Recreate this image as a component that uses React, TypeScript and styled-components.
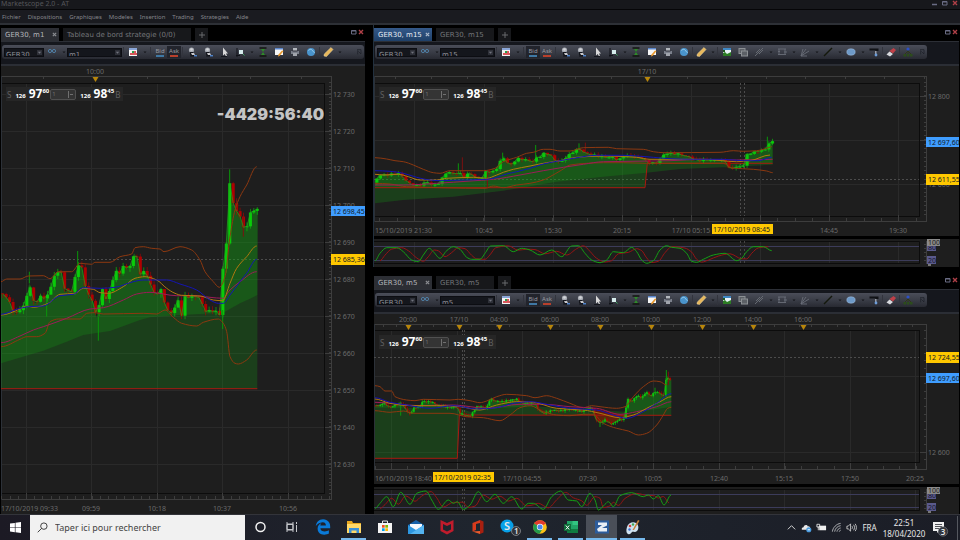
import React from "react";
import styled, { createGlobalStyle, css } from "styled-components";
import { FaEdgeLegacy } from "react-icons/fa";

const GlobalStyle = createGlobalStyle`
  * { box-sizing: border-box; }
  body { margin: 0; background: #000; font-family: "Noto Sans", "Open Sans", sans-serif; }
  button, input, select { font: inherit; color: inherit; border: 0; padding: 0; margin: 0; background: none; border-radius: 0; }
  svg { display: block; }
`;

/* ------------------------------------------------------------------ */
/* Chart geometry                                                      */
/* ------------------------------------------------------------------ */

type Pt = [number, number];

/* Traces are stored on a grid of three units per chart unit. */
const trace = (ox: number, oy: number, raw: string): Pt[] =>
  raw
    .trim()
    .split(/\s+/)
    .map((p) => {
      const [x, y] = p.split(",").map(Number);
      return [ox + x / 3, oy + y / 3] as Pt;
    });

const toPath = (pts: Pt[]) =>
  pts.map(([x, y], i) => `${i ? "L" : "M"}${x.toFixed(1)} ${y.toFixed(1)}`).join("");

/* Horizontal-tangent-limited cubic through every point. */
const toCurve = (pts: Pt[]) => {
  const slope = pts.map((p, i) => {
    if (i === 0 || i === pts.length - 1) return 0;
    const a = (p[1] - pts[i - 1][1]) / (p[0] - pts[i - 1][0]);
    const b = (pts[i + 1][1] - p[1]) / (pts[i + 1][0] - p[0]);
    return a * b <= 0 ? 0 : (2 * a * b) / (a + b);
  });
  return pts
    .map(([x, y], i) => {
      if (!i) return `M${x.toFixed(1)} ${y.toFixed(1)}`;
      const [px, py] = pts[i - 1];
      const h = (x - px) / 3;
      return `C${(px + h).toFixed(1)} ${(py + h * slope[i - 1]).toFixed(1)} ${(x - h).toFixed(1)} ${(y - h * slope[i]).toFixed(1)} ${x.toFixed(1)} ${y.toFixed(1)}`;
    })
    .join("");
};

const toArea = (top: Pt[], bottom: Pt[]) => toPath([...top, ...[...bottom].reverse()]) + "Z";

const valueAt = (pts: Pt[], x: number) => {
  for (let i = 1; i < pts.length; i++) {
    const [x0, y0] = pts[i - 1];
    const [x1, y1] = pts[i];
    if (x <= x1) return y0 + ((y1 - y0) * (x - x0)) / (x1 - x0 || 1);
  }
  return pts[pts.length - 1][1];
};

interface Candle {
  x: number;
  open: number;
  close: number;
  high: number;
  low: number;
}

const toCandles = (price: Pt[], step: number, swing: number): Candle[] => {
  const end = price[price.length - 1][0];
  const out: Candle[] = [];
  let open = price[0][1];
  let i = 0;
  for (let x = price[0][0] + step / 2; x <= end; x += step) {
    const close = valueAt(price, x) + Math.sin(i * 2.7) * swing * 0.3;
    const up = Math.abs(Math.sin(i * 12.9)) * swing;
    const down = Math.abs(Math.cos(i * 7.3)) * swing;
    out.push({ x, open, close, high: Math.min(open, close) - up, low: Math.max(open, close) + down });
    open = close;
    i++;
  }
  return out;
};

interface Label {
  x: number;
  text: string;
  anchor?: "start" | "middle";
}
interface Spike {
  x: number;
  top: number;
  bottom: number;
  rise: boolean;
}
interface ChartSpec {
  name: string;
  box: [number, number, number, number];
  plot: { right: number; top: number; bottom: number };
  axis: { right: number; top: number; bottom: number };
  cols: number[];
  rows: { y: number; text?: string }[];
  minorX: number;
  minorY: number;
  topTicks: number[];
  markers: { x: number; text: string }[];
  dates: Label[];
  cursor?: { xs: number[]; left: number; text: string };
  cursorY: { y: number; text: string };
  last: { y: number; text: string };
  price: Pt[];
  step: number;
  swing: number;
  base: Pt[];
  cloud: Pt[];
  dip?: Pt[];
  upper: Pt[];
  lower: Pt[];
  blue: Pt[];
  orange: Pt[];
  pink: Pt[];
  spikes: Spike[];
}

const range = (from: number, to: number, step: number) => {
  const out: number[] = [];
  for (let v = from; v <= to; v += step) out.push(v);
  return out;
};

const spikes = (ox: number, oy: number, rows: [number, number, number, boolean][]): Spike[] =>
  rows.map(([x, t, b, rise]) => ({ x: ox + x / 3, top: oy + t / 3, bottom: oy + b / 3, rise }));

const m1 = (raw: string) => trace(0, 130, raw);
const m1Chart: ChartSpec = {
  name: "GER30, m1",
  box: [1, 66, 364, 448],
  plot: { right: 324, top: 83, bottom: 493 },
  axis: { right: 331, top: 76, bottom: 499 },
  cols: [26, 91, 157, 222, 288],
  rows: [94, 131, 168, 205, 242, 279, 316, 353, 390, 427, 464].map((y, i) => ({ y, text: `12 ${730 - i * 10}` })),
  minorX: 8.2,
  minorY: 3.7,
  topTicks: [43, 95, 147, 198, 250, 301],
  markers: [{ x: 95, text: "10:00" }],
  dates: [
    { x: 1, text: "17/10/2019 09:33", anchor: "start" },
    { x: 91, text: "09:59" },
    { x: 157, text: "10:18" },
    { x: 222, text: "10:37" },
    { x: 288, text: "10:56" },
  ],
  cursorY: { y: 259, text: "12 685,36" },
  last: { y: 211, text: "12 698,45" },
  price: m1(
    "3,490 15,495 25,510 38,540 48,552 62,535 75,525 88,458 100,515 108,518 118,500 135,503 148,490 160,438 172,430 183,420 195,485 205,478 215,488 225,440 235,405 245,412 257,470 268,503 278,510 290,563 298,520 306,472 318,510 328,480 340,450 350,415 360,435 370,405 382,415 390,410 402,370 410,380 420,430 432,425 445,440 460,490 470,492 482,478 495,520 505,548 520,548 532,503 545,555 555,500 570,500 585,498 600,503 612,540 625,545 640,540 655,550 660,555 668,420 678,360 689,155 698,220 710,240 720,262 730,290 740,293 750,250 760,240 773,240"
  ),
  step: 3.44,
  swing: 4,
  base: m1("3,776 772,776"),
  cloud: m1("3,700 130,662 200,635 250,615 330,603 420,570 450,562 530,556 670,548 720,520 750,506 772,495"),
  upper: m1(
    "3,455 20,447 60,447 85,438 130,437 150,446 175,425 215,425 240,400 275,403 285,397 330,397 360,380 395,372 405,353 430,350 455,355 480,357 492,365 540,350 575,360 600,390 615,425 640,455 658,472 675,440 690,320 705,240 720,200 740,165 770,110"
  ),
  lower: m1(
    "3,650 60,628 80,620 110,620 135,610 150,575 175,567 240,567 260,550 285,548 310,552 430,550 470,552 495,540 520,562 545,580 590,588 610,577 655,567 670,580 680,605 690,680 705,700 715,702 740,690 770,660"
  ),
  blue: m1(
    "3,553 50,538 85,530 130,528 180,497 220,493 250,473 300,475 345,472 400,455 430,450 500,450 540,462 590,480 630,510 655,520 670,520 690,495 720,455 740,430 770,388"
  ),
  orange: m1(
    "3,555 60,537 80,528 100,532 145,520 180,493 225,490 250,475 280,478 300,488 325,490 370,470 405,445 435,440 470,450 500,475 525,490 545,496 600,498 640,510 668,512 690,460 710,415 740,380 770,348"
  ),
  pink: m1(
    "3,638 60,618 100,600 130,590 200,565 270,537 310,533 370,510 410,492 450,487 530,497 580,497 630,502 668,505 690,480 720,455 770,425"
  ),
  spikes: spikes(0, 130, [
    [88, 425, 460, true],
    [140, 505, 560, true],
    [233, 363, 405, true],
    [295, 560, 632, true],
    [668, 540, 597, true],
    [689, 118, 160, true],
    [710, 205, 240, false],
    [730, 260, 320, false],
  ]),
};

const m15 = (raw: string) => trace(370, 120, raw);
const m15Chart: ChartSpec = {
  name: "GER30, m15",
  box: [374, 66, 585, 170],
  plot: { right: 919, top: 83, bottom: 216 },
  axis: { right: 926, top: 76, bottom: 221 },
  cols: [414, 484, 553, 622, 691, 760, 829, 898],
  rows: [{ y: 96, text: "12 800" }, { y: 140 }, { y: 184, text: "12 600" }],
  minorX: 17.3,
  minorY: 4.4,
  topTicks: [395, 431, 467, 503, 539, 575, 611, 647, 687, 726, 766, 805, 845, 884, 924],
  markers: [{ x: 647, text: "17/10" }],
  dates: [
    { x: 375, text: "15/10/2019 21:30", anchor: "start" },
    { x: 484, text: "10:45" },
    { x: 553, text: "15:30" },
    { x: 622, text: "20:15" },
    { x: 691, text: "17/10 05:15" },
    { x: 829, text: "14:45" },
    { x: 898, text: "19:30" },
  ],
  cursor: { xs: [740, 744], left: 712, text: "17/10/2019 08:45" },
  cursorY: { y: 179, text: "12 611,55" },
  last: { y: 142, text: "12 697,60" },
  price: m15(
    "15,188 25,165 50,165 85,160 100,172 115,190 145,198 170,185 190,198 205,190 220,170 230,155 245,160 270,160 285,175 298,155 315,172 335,175 345,155 375,155 390,125 398,110 412,128 425,135 440,115 470,120 490,125 497,110 505,120 515,100 540,102 550,118 570,128 590,110 610,95 627,85 645,100 670,105 690,110 710,112 730,112 745,122 760,108 785,108 800,112 820,115 835,130 860,128 885,100 930,102 945,108 965,112 975,122 1010,120 1065,120 1075,145 1110,140 1122,135 1130,105 1145,98 1170,92 1188,88 1195,70 1208,65"
  ),
  step: 3.63,
  swing: 2.4,
  base: m15("15,203 825,203 832,130 1208,130"),
  cloud: m15("15,250 100,240 250,230 400,212 560,185 700,170 830,158 930,147 1060,142 1208,134"),
  upper: m15(
    "15,113 50,117 75,122 100,125 130,135 160,148 190,158 210,160 240,152 340,152 375,145 400,125 420,118 440,112 470,100 490,97 520,88 540,88 570,93 600,93 640,83 715,82 740,86 820,88 850,95 880,98 1050,97 1090,92 1120,94 1160,92 1190,85 1205,80"
  ),
  lower: m15(
    "15,190 60,192 110,200 345,205 370,198 400,203 440,195 480,190 520,180 540,170 575,150 600,135 650,130 700,128 760,128 830,130 1060,130 1085,144 1150,148 1190,153 1208,158"
  ),
  blue: m15(
    "15,152 60,154 100,160 140,172 180,180 210,182 280,180 350,178 380,172 410,162 440,155 480,145 520,132 560,124 610,115 680,106 760,106 800,108 850,112 900,116 970,118 1060,118 1120,122 1165,122 1205,112"
  ),
  orange: m15(
    "15,163 40,165 85,163 115,170 150,180 200,180 230,175 310,172 350,175 380,165 400,157 430,148 480,138 530,128 570,122 620,112 700,108 800,112 840,118 1000,118 1100,125 1140,122 1200,105"
  ),
  pink: m15("15,195 100,195 200,190 300,183 370,178 450,165 520,152 580,142 640,133 700,125 780,124 900,122 1000,118 1100,120 1208,118"),
  spikes: spikes(370, 120, [
    [265, 130, 160, true],
    [277, 112, 165, false],
    [398, 98, 115, true],
    [497, 75, 112, true],
    [627, 70, 88, true],
    [646, 68, 100, false],
    [352, 155, 205, false],
    [1192, 50, 80, true],
  ]),
};

const m5 = (raw: string) => trace(370, 365, raw);
const m5Chart: ChartSpec = {
  name: "GER30, m5",
  box: [374, 314, 585, 170],
  plot: { right: 919, top: 330, bottom: 462 },
  axis: { right: 926, top: 324, bottom: 469 },
  cols: [391, 457, 522, 588, 653, 719, 784, 850, 915],
  rows: [{ y: 376 }, { y: 452, text: "12 600" }],
  minorX: 16.4,
  minorY: 7.6,
  topTicks: range(383, 924, 12.6),
  markers: [
    { x: 408, text: "20:00" },
    { x: 459, text: "17/10" },
    { x: 499, text: "04:00" },
    { x: 550, text: "06:00" },
    { x: 600, text: "08:00" },
    { x: 651, text: "10:00" },
    { x: 702, text: "12:00" },
    { x: 753, text: "14:00" },
    { x: 803, text: "16:00" },
  ],
  dates: [
    { x: 375, text: "16/10/2019 18:40", anchor: "start" },
    { x: 522, text: "17/10 04:55" },
    { x: 588, text: "07:30" },
    { x: 653, text: "10:05" },
    { x: 719, text: "12:40" },
    { x: 784, text: "15:15" },
    { x: 850, text: "17:50" },
    { x: 915, text: "20:25" },
  ],
  cursor: { xs: [462, 464], left: 433, text: "17/10/2019 02:35" },
  cursorY: { y: 357, text: "12 724,55" },
  last: { y: 378, text: "12 697,60" },
  price: m5(
    "15,120 30,122 40,112 60,128 75,120 95,115 105,130 120,148 130,130 150,125 155,110 185,110 200,120 235,128 260,125 270,145 300,155 310,140 320,125 335,125 350,130 360,100 375,108 395,110 440,102 455,115 495,115 505,135 520,145 550,135 570,138 600,132 635,140 655,130 668,128 675,160 690,175 705,165 725,178 745,165 765,162 770,100 785,110 800,92 815,98 830,80 840,95 855,80 870,85 884,95 889,22 895,45 904,42"
  ),
  step: 2.1,
  swing: 2,
  base: m5("15,280 262,280 268,150 904,151"),
  cloud: m5("15,128 262,128 300,140 400,128 500,124 600,132 668,134 765,140 820,138 860,132 904,126"),
  dip: m5("668,128 700,136 750,148 765,148"),
  upper: m5(
    "15,62 30,65 45,78 65,78 75,95 110,105 135,107 160,103 240,105 265,103 300,107 330,113 350,108 380,95 410,88 470,92 495,98 530,92 560,100 600,115 640,128 665,122 690,125 740,130 765,125 790,95 820,65 850,48 870,50 890,60"
  ),
  lower: m5(
    "15,137 60,142 100,138 130,145 240,145 290,155 340,158 390,167 420,150 450,128 480,122 520,140 560,150 600,152 640,148 670,148 700,175 740,190 775,198 805,210 830,205 860,180 880,150 893,130 904,127"
  ),
  blue: m5("15,98 60,112 110,120 180,130 250,122 320,132 380,128 430,115 480,110 540,120 600,130 680,135 730,150 770,160 820,140 860,115 904,86"),
  orange: m5("15,102 60,115 120,122 200,122 270,125 330,135 380,120 440,110 490,112 560,130 640,135 690,145 750,158 790,150 830,130 870,110 904,95"),
  pink: m5("15,112 150,122 250,120 350,130 450,118 520,118 600,125 680,130 750,148 800,140 860,125 904,110"),
  spikes: spikes(370, 365, [
    [92, 110, 152, true],
    [889, 15, 95, true],
    [895, 20, 60, false],
    [690, 170, 186, true],
    [855, 68, 85, true],
    [120, 140, 152, false],
  ]),
};

const oscM15 = trace(
  370,
  120,
  "15,422 30,400 50,383 80,383 100,395 125,420 145,425 160,405 178,385 190,395 210,415 230,392 250,380 270,388 290,412 305,418 330,418 345,400 362,378 400,377 430,395 455,385 480,390 510,405 545,390 575,410 605,378 625,377 645,400 665,420 690,428 710,420 730,395 760,398 785,382 800,395 815,420 830,430 850,422 870,390 890,377 905,382 930,385 950,400 965,424 980,427 1000,418 1030,405 1065,400 1100,422 1115,415 1130,395 1150,380 1180,380 1205,392"
);
const oscM5 = trace(
  370,
  365,
  "15,430 30,415 50,395 70,425 92,382 120,418 140,385 168,378 185,405 205,433 235,405 250,415 262,410 280,433 300,420 325,380 350,410 375,388 400,415 425,395 455,432 475,415 490,415 520,433 545,395 572,378 595,405 620,408 635,425 660,385 675,405 685,435 705,418 715,410 730,425 750,392 785,383 820,395 835,390 850,402 865,392 882,420 903,390"
);

/* ------------------------------------------------------------------ */
/* Chart drawing                                                       */
/* ------------------------------------------------------------------ */

const Canvas = styled.svg`
  width: 100%;
  height: auto;
  background: #1e1e1e;
`;
const AxisText = styled.text`
  font-family: "Noto Sans", sans-serif;
  font-size: 7px;
  fill: #6a6a6a;
`;
const TagText = styled(AxisText)`
  fill: #111a26;
`;
const OscText = styled(AxisText)<{ $dark?: boolean }>`
  fill: ${(p) => (p.$dark ? "#1a1a1a" : "#14142a")};
`;

const GREEN = "#08d008";
const RED = "#b40000";
const AXIS = "#3d3d3d";
const GRID = "#2a2a2a";
const BAND = "#8c3810";
const CLOUD = "rgba(20, 165, 20, 0.25)";

function PriceChart({ spec }: { spec: ChartSpec }) {
  const { box, plot, axis } = spec;
  const left = box[0];
  const candles = toCandles(spec.price, spec.step, spec.swing);
  const body = Math.max(1.6, spec.step - 0.4);
  return (
    <Canvas viewBox={box.join(" ")} role="img" aria-label={spec.name}>
      <g stroke={GRID} shapeRendering="crispEdges">
        {spec.cols.map((x) => (
          <path key={x} d={`M${x + 0.5} ${plot.top}V${plot.bottom}`} />
        ))}
        {spec.rows.map(({ y }) => (
          <path key={y} d={`M${left} ${y + 0.5}H${plot.right}`} />
        ))}
      </g>
      <g fill="none" stroke="#0c0c0c" shapeRendering="crispEdges">
        <path d={`M${left} ${plot.top + 0.5}H${plot.right + 0.5}V${plot.bottom + 0.5}H${left}`} />
      </g>
      <g fill="none" stroke={AXIS} shapeRendering="crispEdges">
        <path d={`M${left + 0.5} ${axis.top + 0.5}H${axis.right + 0.5}V${axis.bottom + 0.5}H${left}`} />
        <path d={`M${left + 0.5} ${axis.top}V${axis.bottom + 1}`} stroke="#2c3138" />
        {spec.topTicks.map((x) => (
          <path key={x} d={`M${Math.round(x) + 0.5} ${axis.top}v3`} />
        ))}
        {spec.cols.map((x) => (
          <path key={x} d={`M${x + 0.5} ${axis.bottom}v-6`} />
        ))}
        {range(spec.cols[0] % spec.minorX, axis.right, spec.minorX)
          .filter((x) => x > left)
          .map((x) => (
            <path key={x} d={`M${Math.round(x) + 0.5} ${axis.bottom}v-3`} />
          ))}
        {spec.rows.map(({ y }) => (
          <path key={y} d={`M${axis.right} ${y + 0.5}h-6`} />
        ))}
        {range(axis.top + 6, axis.bottom - 4, spec.minorY).map((y) => (
          <path key={y} d={`M${axis.right} ${Math.round(y) + 0.5}h-2`} />
        ))}
      </g>
      <g stroke="#4c4c4c" strokeDasharray="2 2" shapeRendering="crispEdges">
        <path d={`M${left} ${spec.cursorY.y + 0.5}H${plot.right}`} />
        {spec.cursor?.xs.map((x) => (
          <path key={x} d={`M${x + 0.5} ${plot.top}V${plot.bottom}`} />
        ))}
      </g>

      <path d={toArea(spec.price, spec.base)} fill={CLOUD} />
      <path d={toArea(spec.price, spec.cloud)} fill={CLOUD} />
      {spec.dip && (
        <path
          d={toArea(spec.price.filter(([x]) => x >= spec.dip![0][0] && x <= spec.dip![spec.dip!.length - 1][0]), spec.dip)}
          fill="rgba(150, 0, 0, 0.6)"
        />
      )}
      <path d={toPath(spec.base)} fill="none" stroke="#a81a10" />

      {candles.map((c) => {
        const color = c.close <= c.open ? GREEN : RED;
        return (
          <g key={c.x}>
            <path d={`M${c.x} ${c.high}V${c.low}`} stroke={color} strokeWidth="0.8" opacity="0.75" />
            <rect
              x={c.x - body / 2}
              y={Math.min(c.open, c.close)}
              width={body}
              height={Math.max(1, Math.abs(c.open - c.close))}
              fill={color}
              opacity="0.95"
            />
          </g>
        );
      })}
      {spec.spikes.map((s) => (
        <path key={s.x} d={`M${s.x} ${s.top}V${s.bottom}`} stroke={s.rise ? "#0a960a" : "#7c1010"} />
      ))}
      <path d={toPath(candles.map((c) => [c.x, c.close]))} fill="none" stroke="#20a81c" strokeWidth="0.7" />
      <g fill="none" strokeWidth="1">
        <path d={toCurve(spec.upper)} stroke={BAND} />
        <path d={toCurve(spec.lower)} stroke={BAND} />
        <path d={toCurve(spec.pink)} stroke="#9c1c58" />
        <path d={toCurve(spec.orange)} stroke="#b07810" />
        <path d={toCurve(spec.blue)} stroke="#1414b4" />
      </g>

      {spec.markers.map((m) => (
        <g key={m.x}>
          <AxisText x={m.x} y={axis.top - 2} textAnchor="middle">
            {m.text}
          </AxisText>
          <path d={`M${m.x - 2.5} ${axis.top + 1}h6l-3 5z`} fill="#b8860b" />
        </g>
      ))}
      {spec.rows.map(
        ({ y, text }) =>
          text && (
            <AxisText key={y} x={axis.right + 2} y={y + 3}>
              {text}
            </AxisText>
          )
      )}
      {spec.dates.map((d) => (
        <AxisText key={d.x} x={d.x} y={axis.bottom + 12} textAnchor={d.anchor ?? "middle"}>
          {d.text}
        </AxisText>
      ))}
      <rect x={axis.right} y={spec.last.y - 5} width={box[0] + box[2] - axis.right} height="10" fill="#3f9dff" />
      <TagText x={axis.right + 2} y={spec.last.y + 3}>
        {spec.last.text}
      </TagText>
      <rect x={axis.right} y={spec.cursorY.y - 5} width={box[0] + box[2] - axis.right} height="11" fill="#ffc800" />
      <TagText x={axis.right + 2} y={spec.cursorY.y + 3}>
        {spec.cursorY.text}
      </TagText>
      {spec.cursor && (
        <>
          <rect x={spec.cursor.left} y={axis.bottom + 3} width="61" height="10" fill="#ffc800" />
          <TagText x={spec.cursor.left + 1} y={axis.bottom + 11}>
            {spec.cursor.text}
          </TagText>
        </>
      )}
    </Canvas>
  );
}

interface OscProps {
  name: string;
  top: number;
  height: number;
  levels: [number, number];
  line: Pt[];
  cols: number[];
  cursor: number[];
}

function Oscillator({ name, top, height, levels, line, cols, cursor }: OscProps) {
  const end = line[line.length - 1][0];
  const signal = line
    .map(([x, y], i) => [x + 5, i ? (y * 3 + line[i - 1][1]) / 4 : y] as Pt)
    .filter(([x]) => x <= end + 1);
  const bottom = top + height;
  return (
    <Canvas viewBox={`374 ${top} 585 ${height}`} role="img" aria-label={name}>
      <g stroke={GRID} shapeRendering="crispEdges">
        {cols.map((x) => (
          <path key={x} d={`M${x + 0.5} ${top + 2}V${bottom - 3}`} />
        ))}
      </g>
      <path d={`M374 ${top + 2.5}H919.5V${bottom - 3.5}H374`} fill="none" stroke="#0c0c0c" />
      <path d={`M926.5 ${top + 2}V${bottom - 3}`} stroke={AXIS} />
      {range(top + 5, bottom - 4, 4).map((y) => (
        <path key={y} d={`M924 ${y + 0.5}h3`} stroke={AXIS} />
      ))}
      <g stroke="#3c3c5a" shapeRendering="crispEdges">
        {levels.map((y) => (
          <path key={y} d={`M374 ${y + 0.5}H919`} />
        ))}
      </g>
      <g stroke="#444" strokeDasharray="2 2" shapeRendering="crispEdges">
        {cursor.map((x) => (
          <path key={x} d={`M${x + 0.5} ${top + 2}V${bottom - 3}`} />
        ))}
      </g>
      <path d={toCurve(signal)} fill="none" stroke="#961414" />
      <path d={toCurve(line)} fill="none" stroke="#14a014" />
      <rect x="927" y={levels[0]} width="9" height="5" fill="#5a5a8c" />
      <rect x="927" y={levels[1] - 4} width="9" height="8" fill="#5a5a8c" />
      <OscText x="928" y={levels[0] + 4}>
        80
      </OscText>
      <OscText x="928" y={levels[1] + 3}>
        20
      </OscText>
      <rect x="927" y={levels[0] - 7} width="13" height="7" fill="#8a8a8a" />
      <OscText $dark x="928" y={levels[0] - 1}>
        100
      </OscText>
      <rect x="928" y={levels[1] + 4} width="3" height="2" fill="#777" />
    </Canvas>
  );
}

/* ------------------------------------------------------------------ */
/* Icons                                                               */
/* ------------------------------------------------------------------ */

const toolGlyphs: Record<string, React.ReactNode> = {
  link: (
    <g fill="none" stroke="#4f7ea4" strokeWidth="1">
      <circle cx="4" cy="5" r="1.600" />
      <circle cx="8" cy="5" r="1.600" />
      <path d="M3 9h1M6 9h1M9 9h1" stroke="#30343c" />
    </g>
  ),
  sheet: (
    <>
      <rect x="2" y="2" width="8" height="8" fill="#f4f4f4" />
      <path d="M2 2h8v2H2z" fill="#8aa6d8" />
      <path d="M3 7h3V5h3v2h1v2H3z" fill="#d8585c" />
      <path d="M5 5h2v2H5z" fill="#2ca048" />
    </>
  ),
  magnify: (
    <>
      <path d="M4 10.500c1-2.500 5-2.500 7 0z" fill="#0e1016" />
      <circle cx="5.500" cy="4" r="2.600" fill="#a8acb4" />
      <circle cx="5.500" cy="3.500" r="1.300" fill="#d4d6da" />
      <path d="M4 6h3v3.500H4z" fill="#14161c" />
      <path d="M5 7h3l1 2H6z" fill="#c8c8cc" />
      <path d="M8 9h3v1.500H8z" fill="#4f82c8" />
    </>
  ),
  cursor: (
    <>
      <path d="M5 1.500v8l1.800-1.500L8 10.500l1-.6-1-2.400h2z" fill="#d8d8d8" />
      <path d="M3 10.500h6" stroke="#14161c" />
    </>
  ),
  cross: (
    <>
      <path d="M3 2v9M2 9.500h4" stroke="#101218" fill="none" />
      <rect x="5" y="4" width="4" height="4" fill="#d6ecec" />
      <path d="M9 8l1.500 1.500" stroke="#3aa45c" />
    </>
  ),
  sigma: (
    <>
      <path d="M2.500 2h7M2.500 10h7" stroke="#12160f" strokeWidth="1.500" />
      <path d="M4 3h4L6 6l2 3H4l2-3z" fill="#2f8a2a" />
    </>
  ),
  note: (
    <>
      <rect x="2" y="2" width="8" height="7" fill="#f6f6f6" />
      <path d="M2 2h8v1.500H2z" fill="#5a86cc" />
      <path d="M10.500 5L7 9.500l-2 1.200.5-2.200L9 4.500z" fill="#e8982c" />
    </>
  ),
  printer: (
    <>
      <path d="M4 2h4v3H4z" fill="#b4b8be" />
      <path d="M2 5h8v3H2z" fill="#7c818c" />
      <path d="M3.500 4.500h5v1h-5z" fill="#2c2f38" />
      <path d="M4 7h4v3H4z" fill="#a0a4ac" />
    </>
  ),
  globe: (
    <>
      <circle cx="6" cy="6" r="4" fill="#4a94cc" />
      <path d="M3.500 4.500c2-2 3-1 4 0s1 2 2 2" stroke="#a4d4f0" fill="none" />
    </>
  ),
  pencil: <path d="M9 1.500l2 2L4.500 10.500 2 10l.3-2z" fill="#e8b85c" stroke="#f4dca0" strokeWidth="0.500" />,
  picture: (
    <>
      <rect x="2" y="2" width="8" height="8" fill="#e8f2f8" />
      <path d="M2 2h8v2H2z" fill="#3f88c4" />
      <path d="M2 10V7l2-1 2 2 4-2v4z" fill="#2c7c24" />
      <path d="M2 4h2v2H2z" fill="#205820" />
    </>
  ),
  copies: (
    <g stroke="#8c9094" fill="#5c6066">
      <rect x="2" y="2.500" width="6" height="5" />
      <rect x="4.500" y="5" width="6" height="5" />
    </g>
  ),
  fork: <path d="M2 10l3-3 5-5M4 5l3 3M3 7l4-4M6 8l4-4" stroke="#6a6e76" fill="none" strokeWidth="0.900" />,
  channel: <path d="M2 3h8M2 8.500h8M3 3v5.500M9 3v5.500M2 5.500h2M8 6h3" stroke="#6a6e78" fill="none" strokeWidth="0.900" />,
  fan: <path d="M2 10L4 3M2 10l5-7M2 10l8-5M2 10h6" stroke="#6a6e78" fill="none" strokeWidth="0.900" />,
  line: <path d="M2 10l8-8" stroke="#14180c" strokeWidth="1.500" />,
  ellipse: <ellipse cx="6" cy="6" rx="4.200" ry="3.200" fill="#6e9ac8" stroke="#a8c4e4" strokeWidth="0.500" />,
  painter: (
    <>
      <path d="M1.500 2.500h9V5h-3V4.500h-6z" fill="#101216" />
      <path d="M7 5h1.500v3H7z" fill="#9a9ea8" />
      <circle cx="8" cy="9" r="1.400" fill="#6c9cd8" />
    </>
  ),
  eraser: (
    <>
      <path d="M1.500 8.500l3-3L8 8l-3 2.500z" fill="#d8dade" />
      <path d="M4.500 5l4-3 2.500 2L8 7.500z" fill="#c04048" />
    </>
  ),
  tree: (
    <>
      <path d="M6 4v4M3 8l3-3 3 3" stroke="#30381c" fill="none" />
      <circle cx="6" cy="3" r="1.600" fill="#2c50c8" />
      <path d="M1.500 8h2.500v2.500H1.500zM4.800 8h2.500v2.500H4.800zM8 8h2.500v2.500H8z" fill="#2c4c1c" />
    </>
  ),
  overflow: <path d="M3 2.500h6v6M4 3.500v6M5 5l4 4" stroke="#1a1c24" fill="none" />,
};

/* ------------------------------------------------------------------ */
/* Application frame                                                   */
/* ------------------------------------------------------------------ */

const Screen = styled.div`
  display: grid;
  grid-template-rows: auto auto 1fr auto;
  min-height: 100vh;
  background: #000;
`;
const TitleBar = styled.header`
  display: flex;
  justify-content: space-between;
  align-items: center;
  height: 9px;
  padding: 0 2px 3px 1px;
  background: #17181c;
  color: #55565a;
  font-size: 7px;
  line-height: 7px;
`;
const WindowButtons = styled.div`
  display: flex;
  gap: 4px;
`;
const WindowButton = styled.button<{ $danger?: boolean }>`
  width: 6px;
  height: 7px;
  color: ${(p) => (p.$danger ? "#b04048" : "#6a6c84")};
  svg {
    width: 6px;
    height: 6px;
  }
`;
const MenuBar = styled.nav`
  display: flex;
  align-items: center;
  gap: 7px;
  height: 16px;
  padding: 0 2px;
  background: #1a1b20;
  border-top: 1px solid #060608;
  border-bottom: 2px solid #2d3036;
`;
const MenuItem = styled.button`
  font-size: 6px;
  line-height: 12px;
  color: #84858a;
`;
const Workspace = styled.main`
  display: grid;
  grid-template-columns: minmax(0, 364fr) minmax(0, 585fr);
  gap: 9px;
  padding: 0 1px;
  background: #000;
`;
const RightColumn = styled.div`
  display: flex;
  flex-direction: column;
  gap: 6px;
`;
const Pane = styled.section<{ $active?: boolean }>`
  display: flex;
  flex-direction: column;
  min-width: 0;
  box-shadow: ${(p) => (p.$active ? "-1px 0 #22303e" : "none")};
`;
const Divider = styled.div`
  height: 3px;
  background: #000;
`;
const TabRow = styled.div`
  display: flex;
  align-items: flex-end;
  height: 16px;
  padding-top: 3px;
  gap: 4px;
`;
const Tab = styled.button<{ $tone: "on" | "focus" | "off"; $wide?: boolean }>`
  display: flex;
  align-items: center;
  justify-content: space-between;
  height: 13px;
  width: ${(p) => (p.$wide ? 128 : 58)}px;
  padding: 0 2px 0 4px;
  font-family: "DejaVu Sans", sans-serif;
  font-size: 7px;
  white-space: nowrap;
  ${(p) =>
    p.$tone === "focus"
      ? css`background: linear-gradient(#34598a, #1f4068); color: #e6ebf2;`
      : p.$tone === "on"
        ? css`background: #2c2e34; color: #b4b6ba;`
        : css`background: #17181b; color: #737579;`}
  svg {
    width: 5px;
    height: 5px;
    opacity: 0.7;
  }
`;
const AddTab = styled(Tab)`
  width: 13px;
  padding: 0;
  justify-content: center;
  svg {
    width: 6px;
    height: 6px;
  }
`;
const PaneButtons = styled.div`
  display: flex;
  align-self: flex-start;
  gap: 1px;
  margin-left: auto;
  padding-right: 1px;
`;
const ToolStrip = styled.div`
  height: 25px;
  padding: 3px 1px 0;
  background: #15171d;
  border-top: 1px solid #2c2f36;
  border-bottom: 2px solid #2b2e35;
`;
const ToolBar = styled.div<{ $short?: boolean }>`
  display: flex;
  align-items: center;
  height: 14px;
  max-width: ${(p) => (p.$short ? "none" : "552px")};
  overflow: hidden;
  border-radius: 3px;
  padding-left: 2px;
  background: linear-gradient(#4a4d58, #3a3d47 50%, #282a32);
`;
const Combo = styled.span<{ $wide?: boolean }>`
  position: relative;
  display: block;
  flex: none;
  width: ${(p) => (p.$wide ? 55 : 40)}px;
  height: 9px;
  background: #14161c;
  border: 1px solid #0c0d12;
  color: #8c8e96;
  overflow: hidden;
  svg {
    position: absolute;
    right: 1px;
    top: 1px;
    width: 5px;
    height: 5px;
    pointer-events: none;
  }
`;
const Select = styled.select`
  display: block;
  appearance: none;
  width: 100%;
  height: 12px;
  padding-left: 1px;
  font-family: "DejaVu Sans", sans-serif;
  font-size: 7px;
  line-height: 12px;
`;
const ToolButton = styled.button`
  flex: none;
  width: 16px;
  height: 12px;
  svg {
    width: 12px;
    height: 12px;
    margin: 0 auto;
  }
`;
const OverflowButton = styled(ToolButton)`
  width: 10px;
  svg {
    width: 8px;
    height: 8px;
  }
`;
const DropButton = styled.button`
  flex: none;
  width: 7px;
  height: 8px;
  svg {
    width: 4px;
    height: 3px;
    margin: 0 auto;
  }
`;
const Separator = styled.span<{ $room?: number }>`
  flex: none;
  width: 1px;
  height: 10px;
  margin: 0 ${(p) => p.$room ?? 0}px;
  background: #32343d;
`;
const PriceToggle = styled.button<{ $bar: string; $down?: boolean }>`
  flex: none;
  width: 14px;
  height: 12px;
  padding: 1px 3px;
  font-size: 6px;
  line-height: 7px;
  color: #9a9ca4;
  background: ${(p) => (p.$down ? "#22242c" : "transparent")};
  &::after {
    content: "";
    display: block;
    height: 2px;
    background: ${(p) => p.$bar};
  }
`;
const ToggleText = styled.span`
  display: flex;
  justify-content: center;
`;
const Spacer = styled.span`
  flex: 1;
`;
const ChartArea = styled.div`
  position: relative;
`;
const Quote = styled.form`
  position: absolute;
  left: 5px;
  top: 21px;
  display: flex;
  align-items: center;
  height: 14px;
  width: 117px;
  padding: 0 1px;
  background: #262626;
  color: #fff;
`;
const QuoteButton = styled.button`
  display: flex;
  align-items: center;
  flex: none;
  height: 14px;
  font-weight: 700;
`;
const Side = styled.span`
  font-size: 8px;
  font-weight: 400;
  color: #606060;
`;
const Small = styled.span`
  font-size: 6px;
  line-height: 8px;
  padding-top: 4px;
  margin: 0 3px 0 4px;
`;
const Big = styled.span`
  font-size: 12px;
  line-height: 14px;
`;
const Pips = styled.span`
  align-self: flex-start;
  font-size: 6px;
  line-height: 8px;
  margin-right: 1px;
`;
const Amount = styled.span`
  display: flex;
  align-items: center;
  flex: none;
  width: 26px;
  height: 11px;
  border: 1px solid #505050;
  border-radius: 2px;
  background: #343434;
  color: #707070;
  svg {
    flex: none;
    width: 6px;
    height: 9px;
  }
`;
const AmountInput = styled.input`
  width: 17px;
  padding-left: 1px;
  font-size: 6px;
  line-height: 8px;
  height: 9px;
`;
const Countdown = styled.div`
  position: absolute;
  right: 41px;
  top: 38px;
  font-family: "Inter", "DejaVu Sans", sans-serif;
  font-size: 16px;
  font-weight: 900;
  line-height: 20px;
  color: #c4c4c4;
`;

const CloseGlyph = () => (
  <svg viewBox="0 0 6 6">
    <path d="M1 1l4 4M5 1L1 5" stroke="currentColor" strokeWidth="1.400" />
  </svg>
);
const FrameGlyph = () => (
  <svg viewBox="0 0 6 6">
    <path d="M0.500 1.500h4.500v3.500H.5zM.5 2h4.500" fill="none" stroke="currentColor" />
  </svg>
);
const Arrow = () => (
  <svg viewBox="0 0 5 4">
    <path d="M.5 .5h4L2.500 3z" fill="#15161b" />
  </svg>
);
const ComboArrow = () => (
  <svg viewBox="0 0 6 6">
    <path d="M0 0h6v6H0z" fill="#2e3038" />
    <path d="M1 2h4L3 4.500z" fill="#70727c" />
  </svg>
);

const Tool = ({ icon, label, drop }: { icon: string; label: string; drop?: boolean }) => (
  <>
    <ToolButton aria-label={label}>
      <svg viewBox="0 0 12 12">{toolGlyphs[icon]}</svg>
    </ToolButton>
    {drop && (
      <DropButton aria-label={`${label} options`}>
        <Arrow />
      </DropButton>
    )}
  </>
);

function ChartTools({ period, full, down }: { period: string; full?: boolean; down: "bid" | "ask" }) {
  return (
    <ToolStrip>
      <ToolBar role="toolbar" $short={!full}>
        <Combo>
          <Select aria-label="Instrument" defaultValue="GER30">
            <option>GER30</option>
          </Select>
          <ComboArrow />
        </Combo>
        <Tool icon="link" label="Link" drop />
        <Combo $wide>
          <Select aria-label="Period" defaultValue={period}>
            <option>{period}</option>
          </Select>
          <ComboArrow />
        </Combo>
        <Separator $room={1} />
        <Tool icon="sheet" label="Chart type" drop />
        <Separator $room={2} />
        <PriceToggle $bar="#3f78a4" $down={down === "bid"}>
          <ToggleText>Bid</ToggleText>
        </PriceToggle>
        <PriceToggle $bar="#b8402c" $down={down === "ask"}>
          <ToggleText>Ask</ToggleText>
        </PriceToggle>
        <Separator $room={1} />
        <Tool icon="magnify" label="Zoom in" />
        <Tool icon="magnify" label="Zoom out" />
        <Tool icon="cursor" label="Pointer" />
        <Tool icon="cross" label="Crosshair" drop />
        <Tool icon="sigma" label="Indicator" />
        <Tool icon="note" label="Annotation" />
        <Tool icon="printer" label="Print" />
        <Tool icon="globe" label="Web" />
        <Separator />
        <Tool icon="pencil" label="Draw" drop />
        {full && (
          <>
            <Separator $room={1} />
            <Tool icon="picture" label="Picture" />
            <Tool icon="copies" label="Copies" />
            <Tool icon="fork" label="Pitchfork" drop />
            <Tool icon="channel" label="Channel" drop />
            <Tool icon="fan" label="Fan" drop />
            <Tool icon="line" label="Line" drop />
            <Tool icon="ellipse" label="Ellipse" drop />
            <Tool icon="painter" label="Format" />
            <Separator />
            <Tool icon="eraser" label="Erase" />
            <Separator />
            <Tool icon="tree" label="Objects" />
          </>
        )}
        <Spacer />
        <OverflowButton aria-label="More tools">
          <svg viewBox="0 0 12 12">{toolGlyphs.overflow}</svg>
        </OverflowButton>
      </ToolBar>
    </ToolStrip>
  );
}

const QuotePanel = () => (
  <Quote onSubmit={(e) => e.preventDefault()}>
    <QuoteButton type="button" aria-label="Sell">
      <Side>S</Side>
      <Small>126</Small>
      <Big>97</Big>
      <Pips>60</Pips>
    </QuoteButton>
    <Amount>
      <AmountInput aria-label="Amount" defaultValue="1" />
      <svg viewBox="0 0 6 9">
        <path d="M.5 1v7M2 4.500h3" stroke="#707070" fill="none" />
      </svg>
    </Amount>
    <QuoteButton type="button" aria-label="Buy">
      <Small>126</Small>
      <Big>98</Big>
      <Pips>45</Pips>
      <Side>B</Side>
    </QuoteButton>
  </Quote>
);

interface TabsProps {
  first: string;
  second: string;
  wide?: boolean;
  focus?: boolean;
}
const Tabs = ({ first, second, wide, focus }: TabsProps) => (
  <TabRow role="tablist">
    <Tab role="tab" aria-selected $tone={focus ? "focus" : "on"}>
      {first}
      <CloseGlyph />
    </Tab>
    <Tab role="tab" $tone="off" $wide={wide}>
      {second}
    </Tab>
    <AddTab $tone="off" aria-label="New tab">
      <svg viewBox="0 0 6 6">
        <path d="M3 0v6M0 3h6" stroke="#8a8c90" />
      </svg>
    </AddTab>
    <PaneButtons>
      <WindowButton aria-label="Maximise pane">
        <FrameGlyph />
      </WindowButton>
      <WindowButton $danger aria-label="Close pane">
        <CloseGlyph />
      </WindowButton>
    </PaneButtons>
  </TabRow>
);

/* ------------------------------------------------------------------ */
/* Taskbar                                                             */
/* ------------------------------------------------------------------ */

const TaskBar = styled.footer`
  display: flex;
  align-items: stretch;
  height: 26px;
  background: linear-gradient(90deg, #1c1a24, #1f252e 50%, #1b1d26);
  border-top: 1px solid #33343a;
  color: #e8e8e8;
`;
const StartButton = styled.button`
  width: 30px;
  svg {
    width: 11px;
    height: 11px;
    margin: 0 auto;
  }
`;
const SearchBox = styled.label`
  display: flex;
  align-items: center;
  gap: 7px;
  width: 215px;
  padding-left: 7px;
  background: #f1f1f1;
  svg {
    width: 11px;
    height: 11px;
  }
`;
const SearchInput = styled.input`
  flex: 1;
  min-width: 0;
  font-size: 9px;
  color: #444;
  outline: none;
  &::placeholder {
    color: #444;
    opacity: 1;
  }
`;
const TaskButton = styled.button<{ $open?: boolean; $current?: boolean }>`
  position: relative;
  display: grid;
  place-items: center;
  width: 31px;
  padding-bottom: 2px;
  background: ${(p) => (p.$current ? "#4a4f58" : "transparent")};
  svg {
    width: 16px;
    height: 16px;
  }
  &::after {
    content: "";
    display: ${(p) => (p.$open ? "block" : "none")};
    position: absolute;
    left: ${(p) => (p.$current ? 0 : 3)}px;
    right: ${(p) => (p.$current ? 0 : 3)}px;
    bottom: 0;
    height: 2px;
    background: #76b9ed;
  }
`;
const Tray = styled.div`
  display: flex;
  align-items: center;
  margin-left: auto;
  font-size: 8px;
`;
const TrayButton = styled.button<{ $wide?: boolean }>`
  display: grid;
  place-items: center;
  width: ${(p) => (p.$wide ? 21 : 15)}px;
  height: 24px;
  font-size: 8px;
  svg {
    width: 11px;
    height: 11px;
  }
`;
const Clock = styled.time`
  width: 48px;
  text-align: center;
  font-size: 8px;
  line-height: 11px;
`;
const NoticeButton = styled.button`
  width: 30px;
  height: 24px;
  margin-right: 2px;
  border-right: 1px solid #55585f;
  padding-left: 3px;
  svg {
    width: 18px;
    height: 18px;
  }
`;
const BadgeText = styled.text`
  font-family: "Noto Sans", sans-serif;
  font-weight: 600;
  fill: #e8e8e8;
`;

const apps: { name: string; open?: boolean; current?: boolean; icon: React.ReactNode }[] = [
  {
    name: "Cortana",
    icon: (
      <svg viewBox="0 0 16 16">
        <circle cx="7.500" cy="8" r="4.500" fill="none" stroke="#f2f2f2" strokeWidth="1.500" />
      </svg>
    ),
  },
  {
    name: "Task view",
    icon: (
      <svg viewBox="0 0 16 16">
        <path d="M3 3v2h6V3M3 13v-2h6v2M3 5v6M9 5v6M3 5.500h6v5H3zM12.500 3v2M12.500 6v7" fill="none" stroke="#c4c6ca" />
      </svg>
    ),
  },
  { name: "Edge", icon: <FaEdgeLegacy color="#0a7ad8" /> },
  {
    name: "Explorer",
    open: true,
    icon: (
      <svg viewBox="0 0 16 16">
        <path d="M1 2h5l1 2h8v10H1z" fill="#e8a820" />
        <path d="M1 5h14v9H1z" fill="#ffd868" />
        <path d="M3 9h10v5h-2.500v-2.500h-5V14H3z" fill="#3a90d8" />
      </svg>
    ),
  },
  {
    name: "Store",
    icon: (
      <svg viewBox="0 0 16 16">
        <path d="M5.500 4V2h5v2" fill="none" stroke="#e8e8e8" />
        <path d="M1 4h14v10H1z" fill="#f4f4f4" />
        <path d="M5 6h2.700v2.700H5z" fill="#f25022" />
        <path d="M8.300 6H11v2.700H8.300z" fill="#7fba00" />
        <path d="M5 9.300h2.700V12H5z" fill="#00a4ef" />
        <path d="M8.300 9.300H11V12H8.300z" fill="#ffb900" />
      </svg>
    ),
  },
  {
    name: "Mail",
    icon: (
      <svg viewBox="0 0 16 16">
        <path d="M0 6l8-5 8 5v9H0z" fill="#1560a8" />
        <path d="M2 5h12v6H2z" fill="#f4f8fc" />
        <path d="M0 6l8 5 8-5v9H0z" fill="#2c96e0" />
        <path d="M16 6v9H2z" fill="#54b4f0" />
      </svg>
    ),
  },
  {
    name: "McAfee",
    icon: (
      <svg viewBox="0 0 16 16">
        <path d="M1.500 1L8 4l6.500-3v11L8 15.500 1.500 12zM4 5v5.500L8 12.500l4-2V5L8 7z" fill="#c01c2c" fillRule="evenodd" />
      </svg>
    ),
  },
  {
    name: "Office",
    icon: (
      <svg viewBox="0 0 16 16">
        <path d="M2.500 4L10 1v3L6 5v6l-3.500 1.500z" fill="#d83b1c" />
        <path d="M10 1l3.500 1.500v11L10 15z" fill="#a82010" />
        <path d="M2.500 12.500L10 12v3z" fill="#ec5a2c" />
      </svg>
    ),
  },
  {
    name: "Skype",
    icon: (
      <svg viewBox="0 0 16 16" overflow="visible">
        <circle cx="6" cy="7" r="6.500" fill="#08a0e8" />
        <BadgeText x="3" y="11" fontSize="11">
          S
        </BadgeText>
        <circle cx="15" cy="12" r="4.500" fill="#30343a" stroke="#9a9ca0" strokeWidth="0.700" />
        <BadgeText x="13" y="15" fontSize="8">
          1
        </BadgeText>
      </svg>
    ),
  },
  {
    name: "Chrome",
    open: true,
    icon: (
      <svg viewBox="0 0 16 16">
        <circle cx="8" cy="8" r="6.800" fill="#fbc116" />
        <path d="M8 8L2.100 4.600A6.800 6.800 0 0 1 13.900 4.600z" fill="#e33b2e" />
        <path d="M8 8L2.100 4.600A6.800 6.800 0 0 0 7.500 14.800L11 9z" fill="#229a4c" />
        <circle cx="8" cy="8" r="3.200" fill="#f4f4f4" />
        <circle cx="8" cy="8" r="2.500" fill="#4a88ec" />
      </svg>
    ),
  },
  {
    name: "Excel",
    open: true,
    icon: (
      <svg viewBox="0 0 16 16">
        <path d="M4 2h11v12H4z" fill="#21a366" />
        <path d="M9.500 2H15v4H9.500z" fill="#33c481" />
        <path d="M4 10h11v4H4z" fill="#107c41" />
        <path d="M1 5h7v7H1z" fill="#0e6a38" />
        <path d="M2.800 6.500l3.400 4M6.200 6.500l-3.400 4" stroke="#fff" />
      </svg>
    ),
  },
  {
    name: "Marketscope",
    open: true,
    current: true,
    icon: (
      <svg viewBox="0 0 16 16">
        <path d="M1 1.500h14v13H1z" fill="#2c5c9c" />
        <path d="M4 3.500h9v3L8 9h5v3.500H4L3 10l5-4H4z" fill="#e8eef6" />
      </svg>
    ),
  },
  {
    name: "Paint",
    open: true,
    icon: (
      <svg viewBox="0 0 16 16">
        <path d="M2 8c1-4 6-6 9-4s3 6 1 8-4 0-5 1-2 3-4 2-2-4-1-7z" fill="#cfe2f0" />
        <circle cx="5" cy="7" r="1.300" fill="#d8443c" />
        <circle cx="8" cy="5.500" r="1.200" fill="#40a850" />
        <circle cx="4.500" cy="10.500" r="1.200" fill="#3c70d0" />
        <path d="M13 1l1.500.8L9 11H7.500z" fill="#c8843c" />
      </svg>
    ),
  },
];

function SystemTray() {
  return (
    <Tray>
      <TrayButton aria-label="Hidden icons">
        <svg viewBox="0 0 12 12">
          <path d="M2 8l4-4 4 4" fill="none" stroke="#e0e0e0" />
        </svg>
      </TrayButton>
      <TrayButton aria-label="Cloud sync">
        <svg viewBox="0 0 12 12">
          <path d="M1 8.500c-.8-2 .8-3 1.800-2.800C3.200 3 6.500 2.500 7.500 4.800 9.500 4.500 10.500 6 10 8.500z" fill="#e8e8e8" />
          <circle cx="8.500" cy="8.500" r="2.800" fill="#4a9ce0" />
          <path d="M7.300 8.500h2.500" stroke="#fff" />
        </svg>
      </TrayButton>
      <TrayButton aria-label="Battery">
        <svg viewBox="0 0 12 12">
          <path d="M3.500 4h7.500v5H3.500z" fill="#f0f0f0" />
          <path d="M1 2.500h3v3H1zM2.500 5v4" stroke="#f0f0f0" fill="none" strokeWidth="0.900" />
        </svg>
      </TrayButton>
      <TrayButton aria-label="Network">
        <svg viewBox="0 0 12 12">
          <path d="M1.500 10.500C2 6 6 2 10.500 1.500M4 10.500c.5-3.500 3-6 6.500-6.500M6.500 10.500c.3-2 2-3.700 4-4M9 10.500c.1-.8.800-1.400 1.500-1.500" fill="none" stroke="#b8babd" />
        </svg>
      </TrayButton>
      <TrayButton aria-label="Volume">
        <svg viewBox="0 0 12 12">
          <path d="M1 4.500h1.500L5 2v8L2.500 7.500H1zM6.500 4.500c.8 1 .8 2 0 3M8.300 3c1.300 2 1.300 4 0 6M10 2c1.800 2.500 1.800 5.500 0 8" fill="none" stroke="#d8d8d8" strokeWidth="0.900" />
        </svg>
      </TrayButton>
      <TrayButton $wide aria-label="Keyboard language">
        FRA
      </TrayButton>
      <Clock>
        22:51
        <br />
        18/04/2020
      </Clock>
      <NoticeButton aria-label="Notifications, 3 new">
        <svg viewBox="0 0 18 18">
          <path d="M2 3h11v9H8l-2 2v-2H2z" fill="#f0f0f0" />
          <path d="M4 5.500h7M4 7.500h7M4 9.500h4" stroke="#2a2c34" strokeWidth="0.800" />
          <circle cx="12" cy="12.500" r="4.700" fill="#34373e" stroke="#80828a" strokeWidth="0.600" />
          <BadgeText x="9.800" y="15.500" fontSize="8">
            3
          </BadgeText>
        </svg>
      </NoticeButton>
    </Tray>
  );
}

const menu = ["Fichier", "Dispositions", "Graphiques", "Modeles", "Insertion", "Trading", "Strategies", "Aide"];

export default function App() {
  return (
    <Screen>
      <GlobalStyle />
      <TitleBar>
        <span>Marketscope 2.0 - AT</span>
        <WindowButtons>
          <WindowButton aria-label="Minimise">
            <svg viewBox="0 0 6 6">
              <path d="M0 4.500h5" stroke="currentColor" strokeWidth="1.500" />
            </svg>
          </WindowButton>
          <WindowButton aria-label="Restore">
            <FrameGlyph />
          </WindowButton>
          <WindowButton $danger aria-label="Close">
            <CloseGlyph />
          </WindowButton>
        </WindowButtons>
      </TitleBar>
      <MenuBar>
        {menu.map((m) => (
          <MenuItem key={m}>{m}</MenuItem>
        ))}
      </MenuBar>
      <Workspace>
        <Pane>
          <Tabs first="GER30, m1" second="Tableau de bord strategie (0/0)" wide />
          <ChartTools period="m1" down="ask" />
          <ChartArea>
            <PriceChart spec={m1Chart} />
            <QuotePanel />
            <Countdown>-4429:56:40</Countdown>
          </ChartArea>
        </Pane>
        <RightColumn>
          <Pane $active>
            <Tabs first="GER30, m15" second="GER30, m15" focus />
            <ChartTools period="m15" full down="bid" />
            <ChartArea>
              <PriceChart spec={m15Chart} />
              <QuotePanel />
            </ChartArea>
            <Divider />
            <Oscillator
              name="GER30, m15 oscillator"
              top={239}
              height={28}
              levels={[246, 260]}
              line={oscM15}
              cols={m15Chart.cols}
              cursor={[740, 744]}
            />
          </Pane>
          <Pane>
            <Tabs first="GER30, m5" second="GER30, m5" />
            <ChartTools period="m5" full down="bid" />
            <ChartArea>
              <PriceChart spec={m5Chart} />
              <QuotePanel />
            </ChartArea>
            <Divider />
            <Oscillator
              name="GER30, m5 oscillator"
              top={487}
              height={27}
              levels={[494, 507]}
              line={oscM5}
              cols={m5Chart.cols}
              cursor={[462, 464]}
            />
          </Pane>
        </RightColumn>
      </Workspace>
      <TaskBar>
        <StartButton aria-label="Start">
          <svg viewBox="0 0 12 12">
            <path d="M0 1.700l5.300-.7v4.700H0zM6 .9L12 0v5.700H6zM0 6.400h5.300v4.700L0 10.400zM6 6.400h6V12l-6-.8z" fill="#fff" />
          </svg>
        </StartButton>
        <SearchBox>
          <svg viewBox="0 0 12 12">
            <circle cx="7.500" cy="4.500" r="3.500" fill="none" stroke="#333" />
            <path d="M5 7L.8 11.200" stroke="#333" />
          </svg>
          <SearchInput aria-label="Search" placeholder="Taper ici pour rechercher" />
        </SearchBox>
        {apps.map((a) => (
          <TaskButton key={a.name} $open={a.open} $current={a.current} aria-label={a.name}>
            {a.icon}
          </TaskButton>
        ))}
        <SystemTray />
      </TaskBar>
    </Screen>
  );
}
